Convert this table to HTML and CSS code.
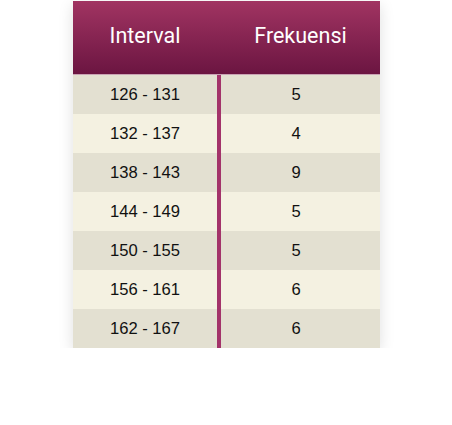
FILE: index.html
```html
<!DOCTYPE html>
<html>
<head>
<meta charset="utf-8">
<link rel="stylesheet" href="styles.css">
</head>
<body>
<div class="table">
  <div class="head">
    <div class="hcell">Interval</div>
    <div class="hsep"></div>
    <div class="hcell">Frekuensi</div>
  </div>
  <div class="body">
    <div class="col left">
      <div class="cell odd">126 - 131</div>
      <div class="cell even">132 - 137</div>
      <div class="cell odd">138 - 143</div>
      <div class="cell even">144 - 149</div>
      <div class="cell odd">150 - 155</div>
      <div class="cell even">156 - 161</div>
      <div class="cell odd">162 - 167</div>
    </div>
    <div class="divider"></div>
    <div class="col right">
      <div class="cell odd">5</div>
      <div class="cell even">4</div>
      <div class="cell odd">9</div>
      <div class="cell even">5</div>
      <div class="cell odd">5</div>
      <div class="cell even">6</div>
      <div class="cell odd">6</div>
    </div>
  </div>
</div>
</body>
</html>
```
FILE: styles.css
```css
html, body {
  margin: 0;
  padding: 0;
  background: #ffffff;
}
body {
  padding-top: 1px;
  padding-left: 73px;
}
.table {
  width: 307px;
  box-shadow: 0 4px 14px rgba(0, 0, 0, 0.13);
}
.head {
  display: grid;
  grid-template-columns: 144px 4px 159px;
  height: 73px;
  background: linear-gradient(to bottom, #a13462 0%, #6b1541 100%);
  border-bottom: 1px solid #c9a3b4;
}
.hcell {
  display: flex;
  align-items: center;
  justify-content: center;
  color: #ffffff;
  font-family: Roboto, "Liberation Sans", sans-serif;
  font-size: 21.5px;
  padding-bottom: 4px;
}
.body {
  display: grid;
  grid-template-columns: 144px 4px 159px;
}
.divider {
  background: #a3336a;
}
.cell {
  height: 39px;
  display: flex;
  align-items: center;
  justify-content: center;
  font-family: "Liberation Sans", Arial, sans-serif;
  font-size: 16.6px;
  color: #111111;
  padding-top: 1px;
  box-sizing: border-box;
}
.right .cell {
  padding-right: 9px;
}
.odd {
  background: #e3e0d1;
}
.even {
  background: #f4f1e1;
}
```
